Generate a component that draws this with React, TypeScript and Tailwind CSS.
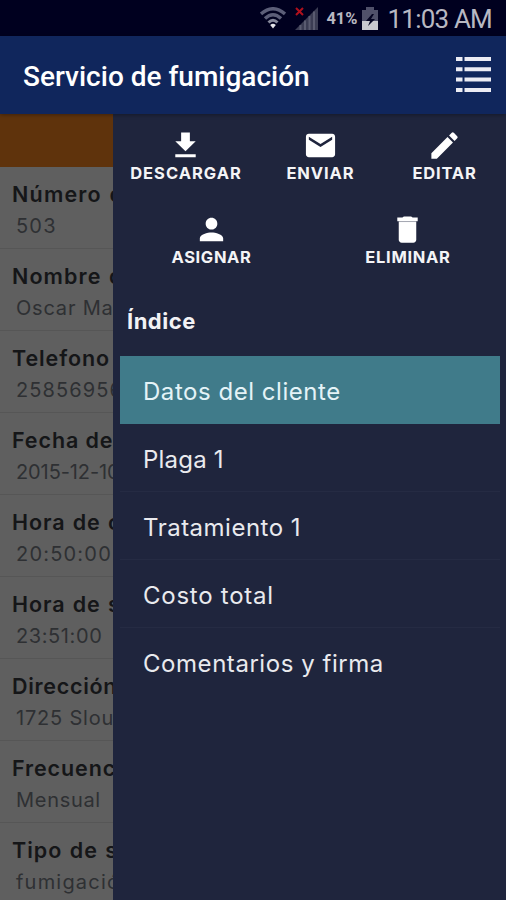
import React from "react";
import { MdFileDownload, MdEmail, MdEdit, MdPerson } from "react-icons/md";

const fields: { label: string; value: string; l: string; v: string }[] = [
  { label: "Número de", value: "503", l: "tracking-[1.2px] [word-spacing:1px]", v: "tracking-[1.2px]" },
  { label: "Nombre de", value: "Oscar Mar", l: "tracking-[1.1px] [word-spacing:1px]", v: "tracking-[0.8px]" },
  { label: "Telefono", value: "25856956", l: "tracking-[0.9px]", v: "tracking-[1.1px]" },
  { label: "Fecha de", value: "2015-12-10", l: "tracking-[0.9px]", v: "tracking-[-0.1px]" },
  { label: "Hora de c", value: "20:50:00", l: "tracking-[0.9px] [word-spacing:1px]", v: "tracking-[1.2px]" },
  { label: "Hora de s", value: "23:51:00", l: "tracking-[0.9px] [word-spacing:1px]", v: "tracking-[0.6px]" },
  { label: "Dirección", value: "1725 Slou", l: "tracking-[0.7px]", v: "tracking-[0.8px]" },
  { label: "Frecuencia", value: "Mensual", l: "tracking-[0.9px]", v: "tracking-[0.7px]" },
  { label: "Tipo de s", value: "fumigació", l: "tracking-[1px] [word-spacing:1px]", v: "tracking-[1.2px]" },
];

const index: { text: string; t: string }[] = [
  { text: "Datos del cliente", t: "tracking-[0.54px]" },
  { text: "Plaga 1", t: "tracking-[0.2px]" },
  { text: "Tratamiento 1", t: "tracking-[0.5px]" },
  { text: "Costo total", t: "tracking-[0.75px]" },
  { text: "Comentarios y firma", t: "tracking-[0.55px]" },
];

function StatusBar() {
  return (
    <div className="flex h-9 shrink-0 items-center justify-end bg-[#00001f] pr-[14px] font-[Roboto,sans-serif] text-[#b8b8c2]">
      <svg className="mr-[9px]" width="26" height="22" viewBox="0 0 26 22" fill="none">
        <path d="M1 7Q13-3.500 25 7" stroke="#5c5e78" strokeWidth="3.400" />
        <path d="M5 11.500Q13 4 21 11.500" stroke="#5c5e78" strokeWidth="3.400" />
        <path d="M8.500 15.500Q13 11 17.500 15.500" stroke="#85879a" strokeWidth="3" />
        <path d="M10.200 18Q13 15.500 15.800 18L13 21.500Z" fill="#e5e5ea" />
      </svg>
      <svg className="mr-[8px]" width="23" height="24" viewBox="0 0 23 24">
        <path d="M0 24L23 1V24Z" fill="#3b3c53" />
        <path d="M5.500 19v5M10 14.500V24M14.500 10v14M19 5.500V24" stroke="#5a5b70" strokeWidth="2" />
        <path d="M1 2l7 7M8 2L1 9" stroke="#b0101c" strokeWidth="2" />
      </svg>
      <span className="mr-[4px] pt-[2px] text-[16.5px] font-bold leading-[34px]">41%</span>
      <svg className="mr-[10px]" width="16" height="23" viewBox="0 0 16 23">
        <path d="M4 0h8v3h4v20H0V3h4z" fill="#50516a" />
        <path d="M0 14h16v9H0z" fill="#c9c9cf" />
        <path d="M10 7L4 14h4l-2 5 7-7H9l3-5z" fill="#050522" />
      </svg>
      <span className="pt-[3px] text-[26px] leading-[33px] tracking-[-0.8px]">11:03 AM</span>
    </div>
  );
}

function TrashIcon() {
  return (
    <svg width="35" height="35" viewBox="0 0 24 24" fill="#fff">
      <path d="M9.500 3h5l1 .8H19V6.300H5V3.800h3.500z" />
      <path d="M6 6.800h12V19c0 1.100-.9 2-2 2H8c-1.100 0-2-.9-2-2z" />
      <path d="M6 6.300h12v.6H6z" fill="#b9bcc4" />
    </svg>
  );
}

function Action({ icon, label, width, tracking }: { icon: React.ReactNode; label: string; width: string; tracking: string }) {
  return (
    <div className={`flex flex-col items-center ${width}`}>
      {icon}
      <span className={`pl-px text-[16.5px] font-bold leading-[21px] text-[#f4f4f6] ${tracking}`}>{label}</span>
    </div>
  );
}

export default function App() {
  return (
    <div className="flex h-[900px] w-[506px] flex-col overflow-hidden bg-[#1f253d] font-[Inter,sans-serif]">
      <StatusBar />
      <header className="relative flex h-[78px] shrink-0 items-center justify-between bg-[#10265c] pl-[23px] pr-[15px] shadow-[0_1px_4px_rgba(0,0,0,0.35)]">
        <h1 className="pt-[3px] font-[Roboto,sans-serif] text-[28px] font-medium leading-8 text-white">Servicio de fumigación</h1>
        <svg className="mb-px" width="35" height="35" viewBox="0 0 35 35" fill="#ececf4">
          <path d="M0 0h6.500v4H0zM8.500 0h26.500v4H8.500zM0 10.300h6.500v4H0zM8.500 10.300h26.500v4H8.500zM0 20.600h6.500v4H0zM8.500 20.600h26.500v4H8.500zM0 31h6.500v4H0zM8.500 31h26.500v4H8.500z" />
        </svg>
      </header>
      <div className="flex min-h-0 flex-1">
        <main className="w-[113px] shrink-0 overflow-hidden whitespace-nowrap bg-[#5f5f5f]">
          <div className="h-[53px] bg-[#5f330c]" />
          {fields.map((f) => (
            <div key={f.label} className="h-[82px] border-b border-[#565656] pl-3 pt-[13px]">
              <div className={`text-[21.5px] font-semibold leading-[28px] text-[#151618] ${f.l}`}>{f.label}</div>
              <div className={`pl-1 pt-1 text-[20px] leading-[28px] text-[#2e3033] ${f.v}`}>{f.value}</div>
            </div>
          ))}
        </main>
        <aside className="w-[393px] shrink-0 bg-[#1f253d]">
          <div className="flex h-[84px] pt-[14px]">
            <Action icon={<MdFileDownload size={35} color="#fff" />} label="DESCARGAR" width="w-[145px]" tracking="tracking-[1px]" />
            <Action icon={<MdEmail size={35} color="#fff" />} label="ENVIAR" width="w-[124px]" tracking="tracking-[0.9px]" />
            <Action icon={<MdEdit size={35} color="#fff" />} label="EDITAR" width="w-[124px]" tracking="tracking-[0.8px]" />
          </div>
          <div className="flex h-[84px] pt-[14px]">
            <Action icon={<MdPerson size={35} color="#fff" />} label="ASIGNAR" width="w-[196px]" tracking="tracking-[0.65px]" />
            <Action icon={<TrashIcon />} label="ELIMINAR" width="w-[197px]" tracking="tracking-[0.7px]" />
          </div>
          <h2 className="pl-[14px] pt-[24px] text-[22px] font-bold leading-[30px] tracking-[0.5px] text-[#f2f2f5]">Índice</h2>
          <nav className="pl-[7px] pr-[6px] pt-[20px]">
            {index.map((item, i) => (
              <div
                key={item.text}
                className={`flex h-[68px] items-center border-b pl-[23px] pt-[4px] text-[24px] leading-8 ${item.t} ${
                  i === 0
                    ? "border-[#407b8a] bg-[#407b8a] text-[#e4f3f7]"
                    : i < 4
                      ? "border-[#252b43] text-[#e9eaee]"
                      : "border-transparent text-[#e9eaee]"
                }`}
              >
                {item.text}
              </div>
            ))}
          </nav>
        </aside>
      </div>
    </div>
  );
}
